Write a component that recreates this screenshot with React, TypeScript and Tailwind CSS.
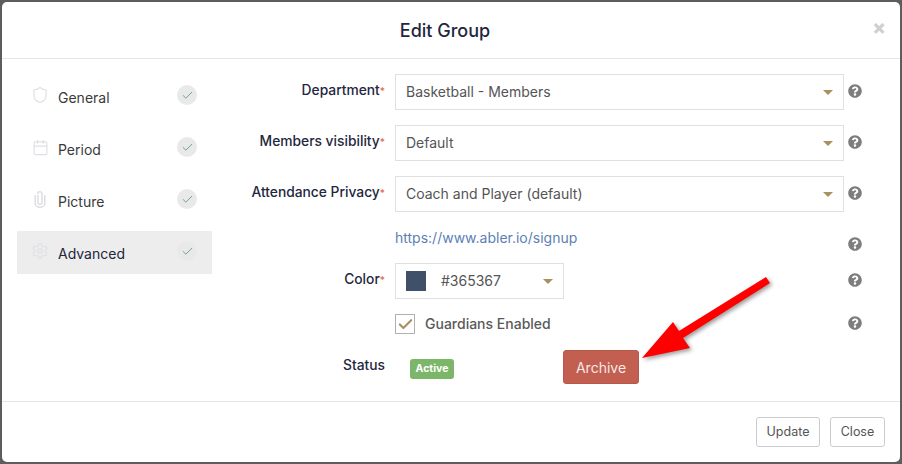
import { Shield, Calendar, Settings, Check } from "lucide-react";
import { FaQuestionCircle } from "react-icons/fa";
import type { ReactNode } from "react";

const font = { fontFamily: "Inter, 'Liberation Sans', sans-serif" };

function Caret() {
  return <span className="block h-0 w-0 border-x-[5px] border-t-[5px] border-x-transparent border-t-[#a8915f]" />;
}

function Clip() {
  return (
    <svg width="12" height="17" viewBox="0 0 12 17" fill="none" stroke="#dfe0e4" strokeWidth="1.6">
      <path d="M4 4v7.5a2 2 0 0 0 4 0V3a2.2 2.2 0 0 0-4.4 0M1.2 4v8.5a4.8 3.8 0 0 0 9.6 0V4" />
    </svg>
  );
}

function NavItem({ icon, label, active }: { icon: ReactNode; label: string; active?: boolean }) {
  return (
    <div className={`flex h-[43px] items-center pl-[14px] pr-[15px] ${active ? "bg-[#ededed]" : ""}`}>
      <span className="-mt-[3px] flex w-[18px] justify-center">{icon}</span>
      <span className={`ml-[9px] flex-1 pt-[1px] text-[14px] ${active ? "text-[#22263a]" : "text-[#3a3a3a]"}`}>{label}</span>
      <span className="-mt-[3px] flex h-5 w-5 items-center justify-center rounded-full bg-[#e8e9e8]">
        <Check size={13} strokeWidth={1.6} className="text-[#5f9a78]" />
      </span>
    </div>
  );
}

function Row({ label, star, children, mb, help = true, helpClass = "" }: { label?: string; star?: boolean; children: ReactNode; mb: string; help?: boolean; helpClass?: string }) {
  return (
    <div className={`flex items-center ${mb}`}>
      <div className="w-[160px] pr-[10px] pb-[2px] text-right text-[13.8px] font-medium leading-none text-[#1f2740]">
        {label}
        {star && <span className="text-[10px] text-[#e2694f]">*</span>}
      </div>
      <div className="flex w-[449px] items-center">{children}</div>
      <div className={`ml-[4px] flex w-[14px] justify-center ${helpClass}`}>
        {help && <FaQuestionCircle className="text-[#7d7d7d]" size={14} />}
      </div>
    </div>
  );
}

function Select({ value }: { value: string }) {
  return (
    <div className="flex h-[36px] w-full items-center justify-between border border-[#e0e0e0] px-[10px] text-[14px] text-[#555555]">
      <span className="pb-[2px]">{value}</span>
      <Caret />
    </div>
  );
}

export default function App() {
  return (
    <div className="relative h-[464px] w-[902px] overflow-hidden bg-[#5d5d5d] p-[2px]" style={font}>
      <div className="flex h-[460px] w-[898px] flex-col rounded-[5px] bg-white">
        <header className="relative flex h-[57px] items-center justify-center border-b border-[#e6e6e6] pr-[12px] text-[18px] font-medium text-[#1f2740]">
          <span className="mt-[1px]">Edit Group</span>
          <span className="absolute right-[14px] top-[15px] text-[20px] font-extrabold leading-none text-[#cfcfcf]">×</span>
        </header>
        <main className="flex flex-1">
          <nav className="ml-[15px] mt-[16px] flex w-[195px] flex-col gap-[9px]">
            <NavItem icon={<Shield size={18} strokeWidth={1.6} className="text-[#dfe0e4]" />} label="General" />
            <NavItem icon={<Calendar size={17} strokeWidth={1.6} className="text-[#dfe0e4]" />} label="Period" />
            <NavItem icon={<Clip />} label="Picture" />
            <NavItem active icon={<Settings size={18} strokeWidth={1.6} className="text-[#dfe0e4]" />} label="Advanced" />
          </nav>
          <section className="ml-[23px] mt-[15px] flex flex-col">
            <Row label="Department" star mb="mb-[15px]" helpClass="-translate-y-px"><Select value="Basketball - Members" /></Row>
            <Row label="Members visibility" star mb="mb-[15px]" helpClass="-translate-y-px"><Select value="Default" /></Row>
            <Row label="Attendance Privacy" star mb="mb-[16px]" helpClass="-translate-y-px"><Select value="Coach and Player (default)" /></Row>
            <Row mb="mb-[15px]" helpClass="translate-y-[6px]">
              <span className="text-[14px] leading-[20px] text-[#5c7fb5]">https://www.abler.io/signup</span>
            </Row>
            <Row label="Color" star mb="mb-[15px]" helpClass="-translate-y-px">
              <div className="flex h-[36px] w-[169px] items-center border border-[#e0e0e0] pl-[10px] text-[14px] text-[#555555]">
                <span className="h-5 w-5 bg-[#3f5068]" />
                <span className="ml-[15px] flex-1 pb-[2px]">#365367</span>
                <span className="mr-[10px]"><Caret /></span>
              </div>
            </Row>
            <Row mb="mb-[16px]" helpClass="-translate-y-px">
              <span className="flex h-5 w-5 items-center justify-center border-[1.5px] border-[#b0b0b0]">
                <Check size={17} strokeWidth={3} className="text-[#a8915f]" />
              </span>
              <span className="ml-[10px] text-[14px] font-medium leading-[20px] text-[#5a5a5a]">Guardians Enabled</span>
            </Row>
            <Row label="Status" mb="" help={false}>
              <span className="ml-[15px] mt-[4px] flex h-5 w-[44px] items-center justify-center rounded-[3px] bg-[#7cb668] text-[10.5px] font-bold text-white">Active</span>
              <span className="ml-[109px] flex h-[34px] w-[76px] items-center justify-center rounded-[3px] border border-[#b8574a] bg-[#c25f50] text-[14px] text-[#f7e9e6]">Archive</span>
            </Row>
          </section>
        </main>
        <footer className="flex h-[61px] items-start justify-end gap-[10px] border-t border-[#e6e6e6] pr-[15px] pt-[15px] text-[12.5px] text-[#555555]">
          <span className="flex h-[30px] w-[64px] items-center justify-center rounded-[3px] border border-[#cccccc]">Update</span>
          <span className="flex h-[30px] w-[55px] items-center justify-center rounded-[3px] border border-[#cccccc]">Close</span>
        </footer>
      </div>
      <svg className="absolute left-0 top-0" width="902" height="464" style={{ filter: "drop-shadow(2px 2px 2px rgba(0,0,0,0.4))" }}>
        <polygon points="642,358 673,322 679,331 766,277 770,283 683,338 690,348" fill="#ff0000" />
      </svg>
    </div>
  );
}
